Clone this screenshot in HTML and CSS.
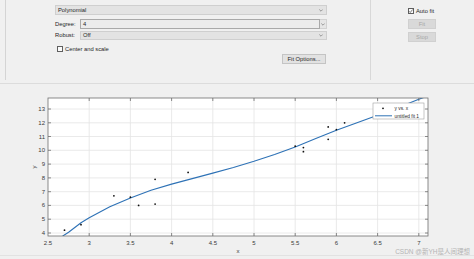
FILE: index.html
```html
<!DOCTYPE html>
<html>
<head>
<meta charset="utf-8">
<link rel="stylesheet" href="styles.css">
</head>
<body>
<div class="app">
  <div class="top">
    <div class="edge"></div>
    <div class="form">
      <div class="select full"><span>Polynomial</span><svg class="chev" width="4" height="3" viewBox="0 0 4 3"><path d="M0.3 0.5 L2 2.2 L3.7 0.5" fill="none" stroke="#777" stroke-width="0.7"/></svg></div>
      <div class="row r2">
        <span class="lbl">Degree:</span>
        <div class="input"><span>4</span></div>
        <div class="spin"><svg class="chev" width="4" height="3" viewBox="0 0 4 3"><path d="M0.3 0.5 L2 2.2 L3.7 0.5" fill="none" stroke="#777" stroke-width="0.7"/></svg></div>
      </div>
      <div class="row r3">
        <span class="lbl">Robust:</span>
        <div class="select grow"><span>Off</span><svg class="chev" width="4" height="3" viewBox="0 0 4 3"><path d="M0.3 0.5 L2 2.2 L3.7 0.5" fill="none" stroke="#777" stroke-width="0.7"/></svg></div>
      </div>
      <div class="row r4">
        <span class="cb"></span><span class="cbtext">Center and scale</span>
      </div>
      <div class="row r5">
        <div class="btn opts">Fit Options...</div>
      </div>
    </div>
    <div class="sep"></div>
    <div class="side">
      <div class="auto"><span class="cb checked"><svg width="6" height="6" viewBox="0 0 6 6"><path d="M1 3.2 L2.4 4.6 L5 1.4" fill="none" stroke="#333" stroke-width="0.7"/></svg></span><span class="cbtext">Auto fit</span></div>
      <div class="btn dis fit">Fit</div>
      <div class="btn dis stop">Stop</div>
    </div>
  </div>
  <div class="plot">
    <svg class="chart" width="474" height="171" viewBox="0 84 474 171">
      <defs>
        <clipPath id="ax"><rect x="48" y="98" width="380" height="138"/></clipPath>
      </defs>
      <rect x="48" y="98" width="380" height="138" fill="#ffffff"/>
      <g stroke="#e4e4e4" stroke-width="0.8">
        <line x1="89.2" y1="98" x2="89.2" y2="236"/>
        <line x1="130.4" y1="98" x2="130.4" y2="236"/>
        <line x1="171.6" y1="98" x2="171.6" y2="236"/>
        <line x1="212.8" y1="98" x2="212.8" y2="236"/>
        <line x1="254" y1="98" x2="254" y2="236"/>
        <line x1="295.2" y1="98" x2="295.2" y2="236"/>
        <line x1="336.4" y1="98" x2="336.4" y2="236"/>
        <line x1="377.6" y1="98" x2="377.6" y2="236"/>
        <line x1="418.8" y1="98" x2="418.8" y2="236"/>
        <line x1="48" y1="233" x2="428" y2="233"/>
        <line x1="48" y1="219.2" x2="428" y2="219.2"/>
        <line x1="48" y1="205.4" x2="428" y2="205.4"/>
        <line x1="48" y1="191.7" x2="428" y2="191.7"/>
        <line x1="48" y1="177.9" x2="428" y2="177.9"/>
        <line x1="48" y1="164.1" x2="428" y2="164.1"/>
        <line x1="48" y1="150.3" x2="428" y2="150.3"/>
        <line x1="48" y1="136.5" x2="428" y2="136.5"/>
        <line x1="48" y1="122.8" x2="428" y2="122.8"/>
        <line x1="48" y1="109" x2="428" y2="109"/>
      </g>
      <g clip-path="url(#ax)">
        <polyline fill="none" stroke="#2e72b6" stroke-width="1.1" stroke-linejoin="round" points="61.5,238 62.8,236 68.6,232.3 81,222.7 89.2,217.8 109.8,206.8 130.4,197.9 151,190.3 171.6,184.1 192.2,178.6 212.8,173.1 233.4,167.5 254,161.3 274.6,154.5 295.2,146.9 315.8,138.6 336.4,130.3 357,122.8 377.6,115.2 398.2,107.6 418.8,99.3 425,97"/>
      </g>
      <g fill="#111">
        <circle cx="64.5" cy="230.2" r="0.9"/>
        <circle cx="81" cy="224.7" r="0.9"/>
        <circle cx="113.9" cy="195.8" r="0.9"/>
        <circle cx="130.4" cy="197.2" r="0.9"/>
        <circle cx="138.6" cy="205.4" r="0.9"/>
        <circle cx="155.1" cy="179.3" r="0.9"/>
        <circle cx="155.1" cy="204.1" r="0.9"/>
        <circle cx="188.1" cy="172.4" r="0.9"/>
        <circle cx="295.2" cy="146.2" r="0.9"/>
        <circle cx="303.4" cy="147.6" r="0.9"/>
        <circle cx="303.4" cy="151.7" r="0.9"/>
        <circle cx="328.2" cy="126.9" r="0.9"/>
        <circle cx="328.2" cy="139.3" r="0.9"/>
        <circle cx="336.4" cy="129.6" r="0.9"/>
        <circle cx="344.6" cy="122.8" r="0.9"/>
      </g>
      <g stroke="#6f6f6f" stroke-width="0.8">
        <rect x="48" y="98" width="380" height="138" fill="none"/>
        <path d="M89.2 236v-3M130.4 236v-3M171.6 236v-3M212.8 236v-3M254 236v-3M295.2 236v-3M336.4 236v-3M377.6 236v-3M418.8 236v-3
                 M89.2 98v3M130.4 98v3M171.6 98v3M212.8 98v3M254 98v3M295.2 98v3M336.4 98v3M377.6 98v3M418.8 98v3
                 M48 233h3M48 219.2h3M48 205.4h3M48 191.7h3M48 177.9h3M48 164.1h3M48 150.3h3M48 136.5h3M48 122.8h3M48 109h3
                 M428 233h-3M428 219.2h-3M428 205.4h-3M428 191.7h-3M428 177.9h-3M428 164.1h-3M428 150.3h-3M428 136.5h-3M428 122.8h-3M428 109h-3"/>
      </g>
      <g class="ticks" text-anchor="middle">
        <text x="48" y="244.5">2.5</text>
        <text x="89.2" y="244.5">3</text>
        <text x="130.4" y="244.5">3.5</text>
        <text x="171.6" y="244.5">4</text>
        <text x="212.8" y="244.5">4.5</text>
        <text x="254" y="244.5">5</text>
        <text x="295.2" y="244.5">5.5</text>
        <text x="336.4" y="244.5">6</text>
        <text x="377.6" y="244.5">6.5</text>
        <text x="418.8" y="244.5">7</text>
      </g>
      <g class="ticks" text-anchor="end">
        <text x="45" y="235">4</text>
        <text x="45" y="221.2">5</text>
        <text x="45" y="207.4">6</text>
        <text x="45" y="193.7">7</text>
        <text x="45" y="179.9">8</text>
        <text x="45" y="166.1">9</text>
        <text x="45" y="152.3">10</text>
        <text x="45" y="138.5">11</text>
        <text x="45" y="124.8">12</text>
        <text x="45" y="111">13</text>
      </g>
      <text class="ticks" x="238" y="252.5" text-anchor="middle">x</text>
      <text class="ticks" x="36" y="167" text-anchor="middle" transform="rotate(-90 36 167)">y</text>
      <rect x="373" y="103" width="51" height="16" fill="#ffffff" stroke="#a0a0a0" stroke-width="0.6"/>
      <circle cx="383" cy="108.3" r="0.9" fill="#111"/>
      <line x1="375" y1="115.8" x2="392" y2="115.8" stroke="#2e72b6" stroke-width="1"/>
      <text class="leg" x="394.5" y="110">y vs. x</text>
      <text class="leg" x="394.5" y="117.6">untitled fit 1</text>
    </svg>
  </div>
  <div class="foot"></div>
  <div class="mark">CSDN @新YH是人间理想</div>
</div>
</body>
</html>
```

FILE: styles.css
```css
* { box-sizing: border-box; }
html, body { margin: 0; padding: 0; }
body {
  width: 474px;
  height: 259px;
  overflow: hidden;
  background: #f0f0f0;
  font-family: "Liberation Sans", Arial, sans-serif;
  font-size: 5.8px;
  color: #262626;
}
.app { position: relative; width: 474px; height: 259px; }
.top {
  display: flex;
  height: 84px;
  border-bottom: 1px solid #dcdcdc;
  background: #f0f0f0;
}
.edge {
  margin-left: 5px;
  width: 1px;
  height: 80px;
  background: #d4d4d4;
}
.form {
  width: 272px;
  flex: none;
  margin-left: 49px;
  padding-top: 5px;
  display: flex;
  flex-direction: column;
}
.select {
  display: flex;
  align-items: center;
  justify-content: space-between;
  background: #e3e3e3;
  border: 1px solid #cfcfcf;
  padding: 0 3px 0 2px;
  height: 10px;
}
.select.full { width: 272px; }
.chev { display: block; }
.row { display: flex; align-items: center; }
.lbl { width: 25px; flex: none; }
.r2 { margin-top: 4px; height: 10px; }
.input {
  width: 240px;
  height: 10px;
  background: #ececec;
  border: 1px solid #a9a9a9;
  padding-left: 2px;
  display: flex;
  align-items: center;
}
.spin {
  width: 7px;
  height: 10px;
  display: flex;
  align-items: center;
  justify-content: center;
  background: #e6e6e6;
  border: 1px solid #d2d2d2;
  border-left: none;
}
.r3 { margin-top: 1px; height: 10px; }
.select.grow { width: 247px; height: 9px; }
.r4 { margin-top: 5px; padding-left: 2px; height: 7px; }
.cb {
  display: inline-flex;
  flex: none;
  width: 6px;
  height: 6px;
  border: 0.8px solid #5f5f5f;
  background: #fbfbfb;
  margin-right: 2px;
}
.cb svg { display: block; margin: -0.8px; }
.r5 { margin-top: 2px; justify-content: flex-end; width: 271px; }
.btn {
  display: flex;
  align-items: center;
  justify-content: center;
  height: 10px;
  border: 1px solid #c4c4c4;
  background: #e2e2e2;
}
.opts { width: 44px; }
.sep {
  flex: none;
  margin-left: 43px;
  width: 1px;
  height: 80px;
  background: #d8d8d8;
}
.side {
  padding-left: 37px;
  padding-top: 7px;
  display: flex;
  flex-direction: column;
}
.auto { display: flex; align-items: center; height: 7px; }
.btn.dis {
  width: 28px;
  background: #d9d9d9;
  border-color: #d0d0d0;
  color: #a8a8a8;
}
.fit { margin-top: 5px; }
.stop { margin-top: 3px; }
.plot { height: 171px; }
.chart { display: block; }
.ticks { font-family: "Liberation Sans", Arial, sans-serif; font-size: 6px; fill: #3a3a3a; }
.leg { font-family: "Liberation Sans", Arial, sans-serif; font-size: 4.8px; fill: #262626; }
.foot { height: 3px; border-top: 1px solid #e2e2e2; }
.mark {
  position: absolute;
  right: 4px;
  bottom: 3px;
  font-family: "Liberation Sans", "Noto Sans CJK SC", sans-serif;
  font-size: 6.5px;
  color: #b4b4b4;
  white-space: nowrap;
}
```
